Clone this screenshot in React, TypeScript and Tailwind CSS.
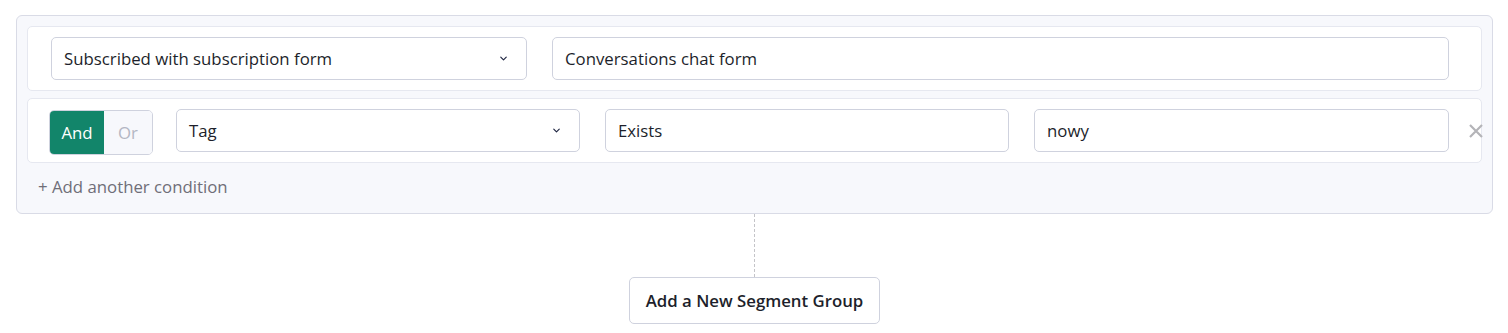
import { ChevronDown } from "lucide-react";

const font = { fontFamily: "'Open Sans', 'Noto Sans', sans-serif" };

function Select({ label, className }: { label: string; className: string }) {
  return (
    <div
      className={`flex h-[43px] items-center justify-between rounded-[5px] border border-[#cfd2de] bg-white pl-[12px] pr-[17px] text-[16.8px] text-[#1d1f2b] ${className}`}
    >
      <span>{label}</span>
      <ChevronDown size={11} strokeWidth={2.5} className="text-[#1d2440]" />
    </div>
  );
}

function Field({ value, className }: { value: string; className: string }) {
  return (
    <div
      className={`flex h-[43px] items-center rounded-[5px] border border-[#cfd2de] bg-white px-[12px] text-[16.8px] text-[#1d1f2b] ${className}`}
    >
      {value}
    </div>
  );
}

export default function App() {
  return (
    <div className="h-[333px] w-[1508px] bg-white pl-[16px] pr-[15px] pt-[15px]" style={font}>
      <div className="rounded-[6px] border border-[#d9dbe6] bg-[#f7f8fc] pl-[10px] pr-[10px] pt-[10px] pb-[14px]">
        <div className="flex items-center gap-[25px] rounded-[5px] border border-[#e6e8f0] bg-white py-[10px] pl-[23px] pr-[32px]">
          <Select label="Subscribed with subscription form" className="w-[476px]" />
          <Field value="Conversations chat form" className="flex-1" />
        </div>
        <div className="mt-[7px] flex items-start rounded-[5px] border border-[#e6e8f0] bg-white pt-[10px] pb-[7px] pl-[21px]">
          <div className="mt-[1px] flex h-[45px] w-[104px] overflow-hidden rounded-[5px] border border-[#cfd2de] text-[16.8px]">
            <div className="flex w-[54px] items-center justify-center bg-[#12856a] text-white">And</div>
            <div className="flex flex-1 items-center justify-center bg-[#f7f8fc] text-[#b3b6c3]">Or</div>
          </div>
          <Select label="Tag" className="ml-[23px] w-[404px]" />
          <Field value="Exists" className="ml-[25px] w-[404px]" />
          <Field value="nowy" className="ml-[25px] flex-1" />
          <svg width="14" height="14" viewBox="0 0 14 14" className="ml-[20px] mr-[-2px] mt-[15px] shrink-0">
            <path d="M1 1L13 13M13 1L1 13" stroke="#b4b4b8" strokeWidth="2.2" />
          </svg>
        </div>
        <div className="mt-[11px] pl-[11px] text-[16.8px] text-[#6f6e78]">+ Add another condition</div>
      </div>
      <div className="flex flex-col items-center">
        <div className="h-[63px] border-l border-dashed border-[#c4c4c8]" />
        <button className="h-[47px] rounded-[5px] border border-[#cfd2de] bg-white px-[16px] text-[16.8px] font-semibold text-[#1d1f2b]">
          Add a New Segment Group
        </button>
      </div>
    </div>
  );
}
